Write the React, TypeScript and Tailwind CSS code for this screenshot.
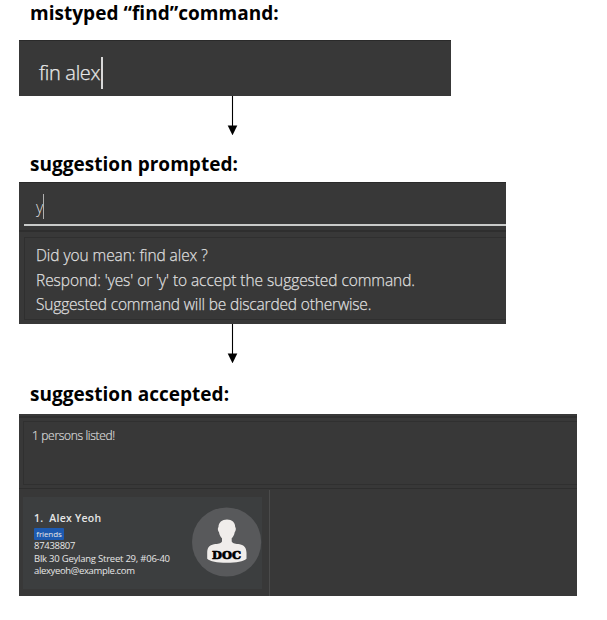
import React from "react";

function Arrow() {
  return (
    <svg className="ml-[227px] block h-[39px] w-[11px]" viewBox="0 0 11 39">
      <path d="M5.5 0V31" stroke="#000" strokeWidth="1.1" />
      <path d="M0.7 29.5H10.3L5.5 39.3Z" fill="#000" />
    </svg>
  );
}

function Avatar() {
  return (
    <svg className="block size-[70px] shrink-0" viewBox="0 0 70 70">
      <circle cx="34.6" cy="35" r="34.6" fill="#58595b" />
      <path
        d="M35 12.5c5 0 8.3 3 8.2 7.6 1.1.8.7 4.2-.5 5.2-.5 3-1.600 4.600-3 6v3.200c1.200 2.300 4 2.200 8 2.700 4.600.8 6.600 3.500 6.800 8.500v6c-3 2.800-10 4-19.800 4s-16.500-1.200-19.500-4v-6c0-5 2-7.700 6.800-8.500 4-.5 6.800-.4 8-2.700v-3.200c-1.400-1.400-2.500-3-3-6-1.200-1-1.600-4.400-.5-5.200-.1-4.600 3.500-7.600 8.500-7.600Z"
        fill="#f0edeb"
      />
      <text
        x="34.5"
        y="51.700"
        textAnchor="middle"
        textLength="29"
        lengthAdjust="spacingAndGlyphs"
        fontFamily="DejaVu Serif, serif"
        fontWeight="700"
        fontSize="11"
        fill="#000"
        stroke="#000"
        strokeWidth="0.7"
      >
        DOC
      </text>
    </svg>
  );
}

const heading = "pl-[30px] text-[19px] font-bold leading-[26px] text-black whitespace-pre";

export default function App() {
  return (
    <main className="h-[620px] w-[607px] overflow-hidden bg-white font-['Open_Sans','Noto_Sans',sans-serif]">
      <h2 className={`${heading} h-10 tracking-[0.03px]`}>mistyped “find”command:</h2>
      <section className="ml-[19px] flex h-14 w-[432px] items-center border-t border-[#2a2a2a] bg-[#383838] pl-5 pt-2">
        <span className="w-[62px] whitespace-pre text-[20px] font-light leading-8 tracking-[-0.300px] text-[#e8e8e8] [-webkit-text-stroke:0.25px_#e8e8e8]">fin alex</span>
        <span className="h-8 w-[2px] bg-[#d8d8d8]" />
      </section>
      <Arrow />
      <h2 className={`${heading} h-[47px] pt-4 tracking-[0.03px]`}>suggestion prompted:</h2>
      <section className="ml-[19px] h-[142px] w-[487px] border-t border-[#2a2a2a] bg-[#383838]">
        <div className="ml-[5px] flex h-[43px] items-start border-b-2 border-b-[#c9cbca] pl-3 pt-[11px]">
          <span className="w-[7px] text-[16px] font-light leading-[26px] text-[#dedede]">y</span>
          <span className="h-[25px] w-px bg-[#b0b0b0]" />
        </div>
        <div className="mt-1 h-[2px] bg-[#2e2e2e]" />
        <div className="ml-[5px] mt-[5px] h-[83px] whitespace-pre border-y border-l border-[#2f2f2f] pl-[11px] pt-[5px] text-[15.500px] font-light leading-[24.500px] text-[#dedede] [-webkit-text-stroke:0.25px_#dedede]">
          <p className="tracking-[-0.070px]">Did you mean: find alex ?</p>
          <p className="tracking-[-0.070px]">Respond: 'yes' or 'y' to accept the suggested command.</p>
          <p className="tracking-[-0.170px]">Suggested command will be discarded otherwise.</p>
        </div>
      </section>
      <Arrow />
      <h2 className={`${heading} h-[51px] pt-[18px] tracking-[0.03px]`}>suggestion accepted:</h2>
      <section className="ml-[19px] h-[182px] w-[558px] bg-[#383838] pt-[2px]">
        <div className="h-[2px] bg-[#2f2f2f]" />
        <div className="ml-[4px] mt-[3px] h-[64px] border-y border-l border-[#303030] pl-[8px] pt-[5px] text-[12px] font-light leading-[18px] text-[#d8d8d8] [-webkit-text-stroke:0.2px_#d8d8d8]">
          <p className="whitespace-pre tracking-[-0.330px]">1 persons listed!</p>
        </div>
        <div className="mt-[3px] h-px bg-[#2e2e2e]" />
        <div className="flex h-[107px]">
          <div className="w-[250px] pl-[4px] pt-[8px]">
            <article className="flex h-[92px] w-[239px] justify-between bg-[#3c3e3f] pl-[11px]">
              <div className="whitespace-pre pt-[14px] text-[9.500px] leading-[12.500px] text-[#e6e6e6]">
                <h3 className="h-[17px] text-[10.500px] font-semibold leading-[15px] tracking-[0.250px]">1.  Alex Yeoh</h3>
                <span className="flex h-[12px] w-[30px] items-center justify-center rounded-[1px] bg-[#1d5ab0] text-[8px] leading-[12px] tracking-[-0.1px]">friends</span>
                <p className="tracking-[-0.3px]">87438807</p>
                <p className="tracking-[-0.230px]">Blk 30 Geylang Street 29, #06-40</p>
                <p className="tracking-[-0.350px]">alexyeoh@example.com</p>
              </div>
              <div className="pt-[10px]">
                <Avatar />
              </div>
            </article>
          </div>
          <div className="mt-px w-px bg-[#4b4b4b]" />
        </div>
      </section>
    </main>
  );
}
